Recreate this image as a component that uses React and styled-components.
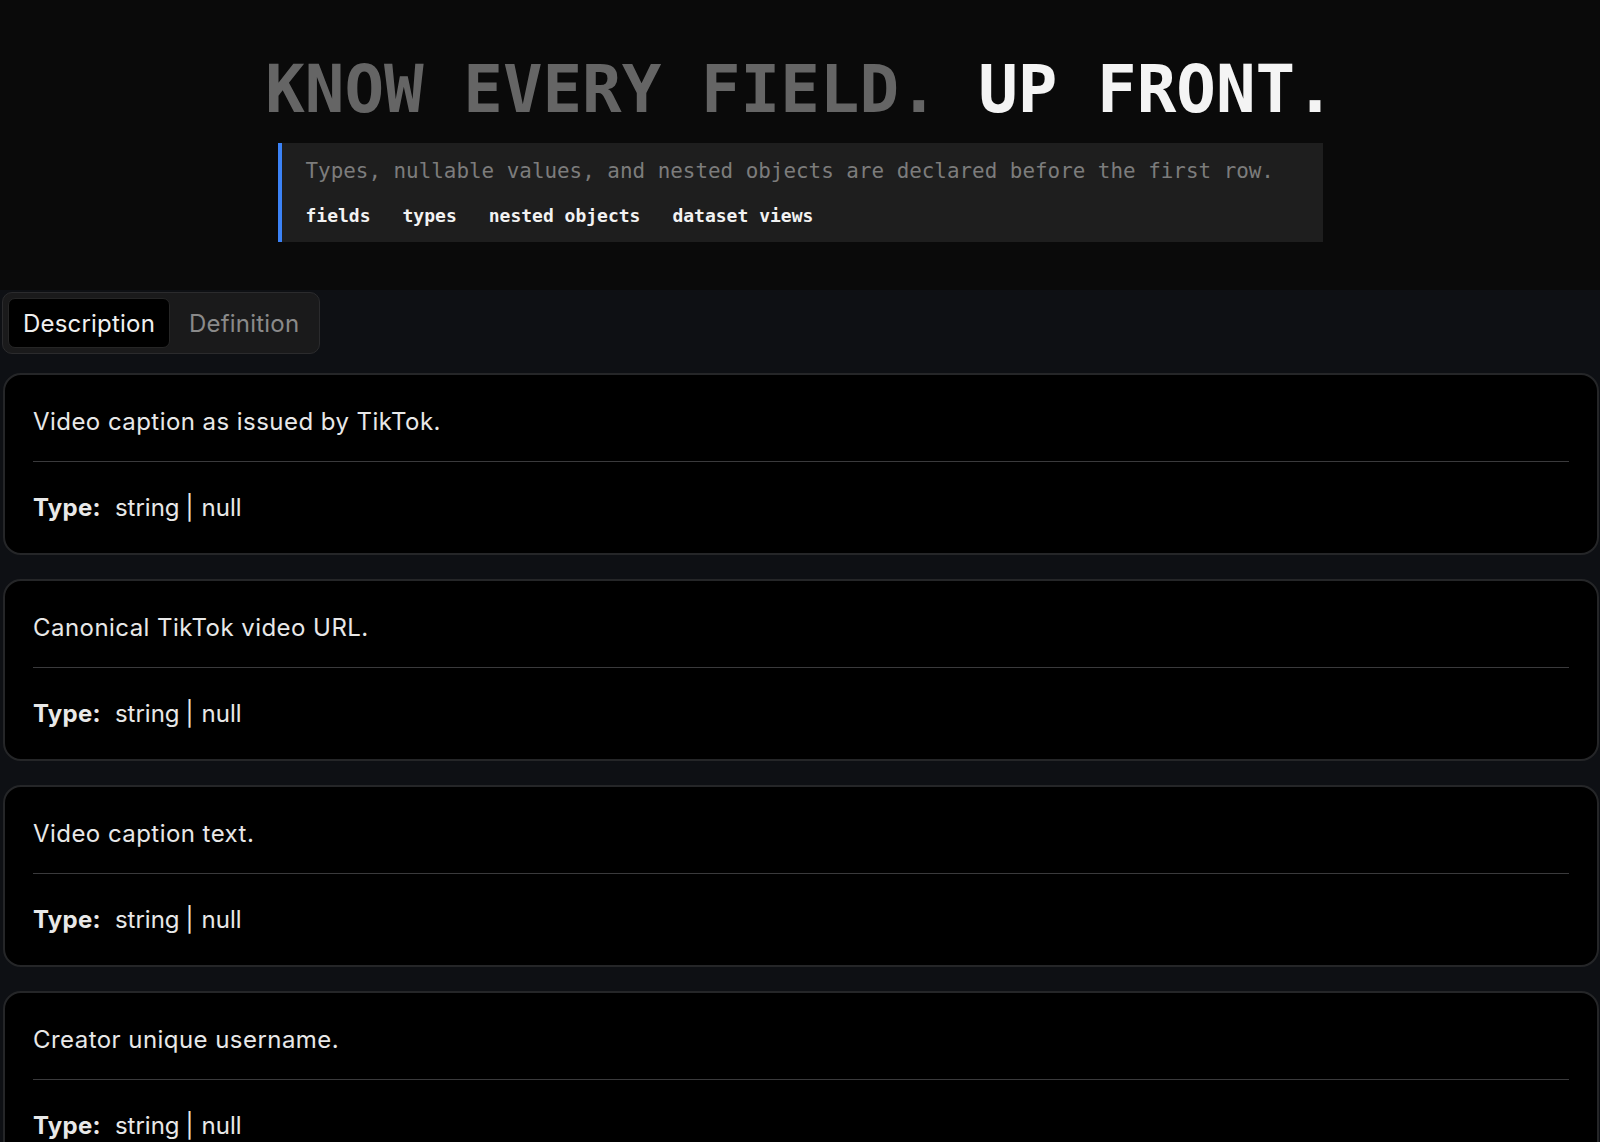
import React, { useState } from "react";
import styled, { createGlobalStyle } from "styled-components";

const GlobalStyle = createGlobalStyle`
  html {
    scrollbar-width: none;
  }
  html::-webkit-scrollbar {
    display: none;
  }
  body {
    margin: 0;
    background: #0e1014;
    font-family: Inter, "Noto Sans", sans-serif;
    color: #e8e8e8;
  }
`;

const Hero = styled.header`
  background: #0a0a0a;
  padding: 54px 0 48px;
  display: flex;
  flex-direction: column;
  align-items: center;
`;

const Title = styled.h1`
  margin: 0 0 17px;
  font-family: "DejaVu Sans Mono", "Liberation Mono", monospace;
  font-size: 65.8px;
  line-height: 72px;
  font-weight: 700;
  color: #656565;
  white-space: nowrap;

  span {
    color: #f4f4f4;
  }
`;

const Callout = styled.div`
  width: 1045px;
  box-sizing: border-box;
  background: #1e1e1e;
  border-left: 4px solid #3b82f6;
  padding: 16px 24px;
  font-family: "DejaVu Sans Mono", "Liberation Mono", monospace;
`;

const Lead = styled.p`
  margin: 0 0 21px;
  font-size: 20.9px;
  line-height: 25px;
  color: #7c7c7c;
  white-space: nowrap;
`;

const Tags = styled.div`
  display: flex;
  gap: 32px;
`;

const Tag = styled.span`
  font-size: 18px;
  font-weight: 700;
  color: #f2f2f2;
`;

const Section = styled.main`
  padding: 2px 1px 40px 3px;
`;

const TabBar = styled.div`
  display: inline-flex;
  gap: 4px;
  padding: 5px;
  background: #1a1a1b;
  border: 1px solid #2b2b2d;
  border-radius: 10px;
  margin-left: -1px;
`;

const Tab = styled.button`
  height: 50px;
  padding: 0 14px;
  border-radius: 7px;
  border: 1px solid ${(p) => (p.$active ? "#262626" : "transparent")};
  background: ${(p) => (p.$active ? "#000" : "transparent")};
  color: ${(p) => (p.$active ? "#f0f0f0" : "#8a8a8a")};
  font-family: Inter, sans-serif;
  font-size: 24px;
  letter-spacing: 0.2px;
  cursor: pointer;
`;

const List = styled.div`
  margin-top: 19px;
  display: flex;
  flex-direction: column;
  gap: 24px;
`;

const Card = styled.article`
  background: #000;
  border: 2px solid #252628;
  border-radius: 18px;
  padding: 32px 28px 31px;
`;

const Desc = styled.p`
  margin: 0 0 25px;
  font-size: 24px;
  letter-spacing: 0.45px;
  color: #e8e8e8;
`;

const Divider = styled.hr`
  margin: 0;
  border: 0;
  height: 1px;
  background: #3a3a3c;
`;

const TypeRow = styled.div`
  margin-top: 31px;
  font-size: 24px;
  color: #e8e8e8;
  display: flex;
  align-items: baseline;
`;

const Label = styled.strong`
  font-weight: 700;
  letter-spacing: 0.3px;
  margin-right: 14px;
`;

const Sep = styled.span`
  margin: 0 8px 0 6px;
`;

const fields = [
  { desc: "Video caption as issued by TikTok.", types: ["string", "null"] },
  { desc: "Canonical TikTok video URL.", types: ["string", "null"] },
  { desc: "Video caption text.", types: ["string", "null"] },
  { desc: "Creator unique username.", types: ["string", "null"] },
  { desc: "Creator display name.", types: ["string", "null"] },
];

function FieldCard({ desc, types }) {
  return (
    <Card>
      <Desc>{desc}</Desc>
      <Divider />
      <TypeRow>
        <Label>Type:</Label>
        {types.map((t, i) => (
          <React.Fragment key={t}>
            {i > 0 && <Sep>|</Sep>}
            <span>{t}</span>
          </React.Fragment>
        ))}
      </TypeRow>
    </Card>
  );
}

export default function App() {
  const [tab, setTab] = useState("description");

  return (
    <>
      <GlobalStyle />
      <Hero>
        <Title>
          KNOW EVERY FIELD. <span>UP FRONT.</span>
        </Title>
        <Callout>
          <Lead>Types, nullable values, and nested objects are declared before the first row.</Lead>
          <Tags>
            <Tag>fields</Tag>
            <Tag>types</Tag>
            <Tag>nested objects</Tag>
            <Tag>dataset views</Tag>
          </Tags>
        </Callout>
      </Hero>
      <Section>
        <TabBar>
          <Tab $active={tab === "description"} onClick={() => setTab("description")}>
            Description
          </Tab>
          <Tab $active={tab === "definition"} onClick={() => setTab("definition")}>
            Definition
          </Tab>
        </TabBar>
        <List>
          {fields.map((f) => (
            <FieldCard key={f.desc} {...f} />
          ))}
        </List>
      </Section>
    </>
  );
}
